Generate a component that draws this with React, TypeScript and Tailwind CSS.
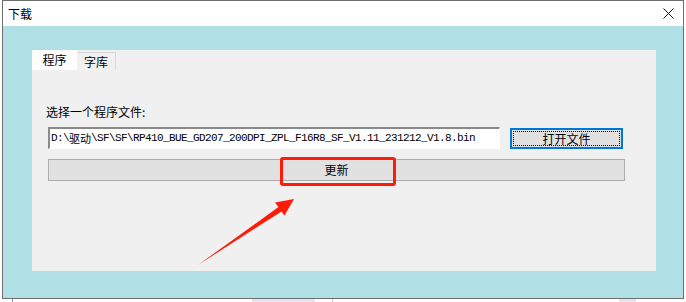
import React from "react";

const UI_FONT = { fontFamily: '"Noto Sans CJK SC", "Noto Sans", sans-serif' };
const MONO_FONT = { fontFamily: '"Liberation Mono", "Noto Sans CJK SC", monospace' };

const FILE_PATH_HEAD = "D:\\";
const FILE_PATH_CJK = "驱动";
const FILE_PATH_TAIL = "\\SF\\SF\\RP410_BUE_GD207_200DPI_ZPL_F16R8_SF_V1.11_231212_V1.8.bin";

function CloseIcon() {
  return (
    <svg width="11" height="11" viewBox="0 0 11 11" aria-hidden="true">
      <path d="M0.5 0.5 L10.5 10.5 M10.5 0.5 L0.5 10.5" stroke="#111" strokeWidth="1" fill="none" />
    </svg>
  );
}

/* 注释用的红色箭头 */
function RedArrow() {
  return (
    <svg
      className="absolute left-0 top-0"
      width="624"
      height="221"
      viewBox="32 50 624 221"
      aria-hidden="true"
    >
      <polygon
        points="294,199 275,202.5 278.5,207 198,265 281.5,211.5 284.5,215.5"
        fill="#ff1a0a"
      />
    </svg>
  );
}

export default function App() {
  return (
    <div className="relative h-[302px] w-[686px] overflow-hidden bg-white" style={UI_FONT}>
      {/* ============ 窗口 ============ */}
      <div className="ml-[2px] flex h-[299px] w-[682px] flex-col border border-[#6e6e6e] bg-white">
        <div className="flex h-[25px] items-center justify-between pl-[5px] pr-[9px]">
          <span className="text-[12px] leading-none text-black">下载</span>
          <CloseIcon />
        </div>

        <div className="flex-1 bg-[#b0dfe5] pl-[29px] pt-[24px]">
          <div className="relative h-[221px] w-[624px] bg-[#f0f0f0]">
            {/* 标签页 */}
            <div className="flex h-[20px] items-end">
              <div className="flex h-[20px] w-[45px] items-center justify-center bg-white text-[12px] text-black">
                程序
              </div>
              <div className="flex h-[18px] w-[39px] items-center justify-center border-r border-t border-[#d9d9d9] bg-[#f0f0f0] text-[12px] text-black">
                字库
              </div>
            </div>

            <div className="pl-[14px] pt-[34px]">
              <p className="text-[12px] leading-[16px] text-black">选择一个程序文件:</p>

              <div className="mt-[7px] flex items-start pl-[2px]">
                <div
                  className="flex h-[22px] w-[452px] items-center overflow-hidden border-b border-l-2 border-r border-t-2 border-b-white border-l-[#8a8a8a] border-r-white border-t-[#8a8a8a] bg-white pl-[1px] text-[11px] tracking-[-0.6px] text-black"
                  style={MONO_FONT}
                >
                  <span className="whitespace-pre">{FILE_PATH_HEAD}</span>
                  <span className="text-[11px] tracking-[0px]" style={UI_FONT}>
                    {FILE_PATH_CJK}
                  </span>
                  <span className="whitespace-pre">{FILE_PATH_TAIL}</span>
                </div>
                <button className="ml-[10px] mt-[1px] flex h-[21px] w-[113px] items-center justify-center border-2 border-[#0078d7] bg-[#e1e1e1] p-[1px]">
                  <span className="flex h-full w-full items-center justify-center border border-dotted border-black text-[12px] text-black">
                    打开文件
                  </span>
                </button>
              </div>

              <button className="ml-[2px] mt-[10px] flex h-[22px] w-[577px] items-center justify-center border border-[#adadad] bg-[#e1e1e1] text-[12px] text-black">
                更新
              </button>
            </div>

            {/* 注释：红框 + 箭头 */}
            <div className="absolute left-[248px] top-[107px] h-[29px] w-[116px] rounded-[3px] border-[3px] border-[#ff1a0a]" />
            <RedArrow />
          </div>
        </div>
      </div>

      {/* 窗口下方露出的背景 */}
      <div className="flex h-[3px]">
        <div className="ml-[12px] w-px bg-[#9a9a9a]" />
        <div className="ml-[239px] w-[63px] bg-[#e3e6ea]" />
        <div className="ml-[17px] w-px bg-[#c8c8c8]" />
        <div className="ml-[286px] w-[17px] bg-[#e3e6ea]" />
      </div>
    </div>
  );
}
